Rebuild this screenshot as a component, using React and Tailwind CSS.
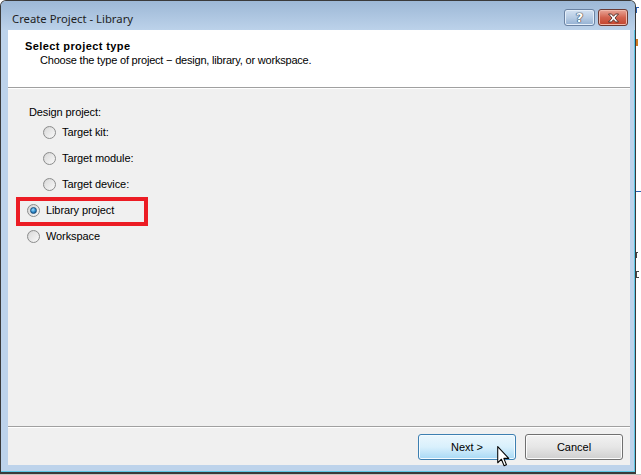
import React from "react";

function Radio({ checked }) {
  return (
    <span className="flex h-[13px] w-[13px] shrink-0 items-center justify-center rounded-full border border-[#8b8c8c] bg-gradient-to-br from-[#d2d2d2] to-[#fafafa]">
      {checked ? (
        <span className="h-[7px] w-[7px] rounded-full border border-[#1b4f7d] bg-[radial-gradient(circle_at_40%_35%,#9fe0ff,#2a86c8_55%,#0d3f6e)]" />
      ) : (
        <span className="h-[9px] w-[9px] rounded-full bg-gradient-to-br from-[#dcdcdc] to-[#f6f6f6]" />
      )}
    </span>
  );
}

function Option({ label, checked }) {
  return (
    <div className="flex items-center gap-[6px]">
      <Radio checked={checked} />
      <span className="tracking-[-0.1px]">{label}</span>
    </div>
  );
}

function DialogButton({ children, primary }) {
  const tone = primary
    ? "border-[#3c7fb1] bg-gradient-to-b from-[#eaf6fd] via-[#d9f0fc] to-[#a7d9f5] shadow-[inset_0_0_0_1px_#f4fbff]"
    : "border-[#707070] bg-gradient-to-b from-[#f2f2f2] via-[#e6e6e6] to-[#cfcfcf] shadow-[inset_0_0_0_1px_#fcfcfc]";
  return (
    <button
      type="button"
      className={`flex h-[26px] w-[98px] items-center justify-center rounded-[3px] border text-[11px] text-black ${tone}`}
    >
      {children}
    </button>
  );
}

export default function App() {
  return (
    <div
      className="flex h-[475px] w-[641px] flex-col overflow-hidden bg-white text-[11px] text-black"
      style={{ fontFamily: '"Liberation Sans", Arial, sans-serif' }}
    >
      <div className="flex">
        {/* window */}
        <div className="flex h-[474px] w-[636px] flex-col rounded-t-[6px] border border-b-2 border-[#3a3a3a] bg-[#bdd3eb] shadow-[inset_-1px_-1px_0_#5cc6e4]">
          {/* title bar */}
          <div className="flex h-[29px] rounded-t-[5px] bg-gradient-to-b from-[#9db8d6] to-[#bcd2ea] pl-[11px] pr-[7px]">
            <span className="pt-[10px] text-[11.3px] leading-[16px] text-[#1e1e1e] [font-family:'Noto_Sans',sans-serif]">
              Create Project - Library
            </span>
            <div className="ml-auto mt-[8px] flex gap-[3px] self-start">
              <div className="flex h-[17px] w-[31px] items-center justify-center rounded-[3px] border border-[#6a82a2] bg-gradient-to-b from-[#d4e2f2] via-[#b7cce4] to-[#93b0d2] shadow-[inset_0_0_0_1px_#e4eef9]">
                <span className="text-[13px] font-bold leading-none text-white [text-shadow:0_0_1px_#2b3a4d,0_0_1px_#2b3a4d,0_0_1px_#2b3a4d] [font-family:'DejaVu_Sans',sans-serif]">
                  ?
                </span>
              </div>
              <div className="flex h-[17px] w-[30px] items-center justify-center rounded-[3px] border border-[#6b3a33] bg-gradient-to-b from-[#e8a597] via-[#d2634f] to-[#c2432c] shadow-[inset_0_0_0_1px_#f0b8aa]">
                <svg width="13" height="10" viewBox="0 0 13 10">
                  <path
                    d="M1.5 1 L4.5 1 L6.5 3.3 L8.5 1 L11.5 1 L8 5 L11.5 9 L8.5 9 L6.5 6.7 L4.5 9 L1.5 9 L5 5 Z"
                    fill="#ffffff"
                    stroke="#4a2a26"
                    strokeWidth="0.9"
                    strokeLinejoin="round"
                  />
                </svg>
              </div>
            </div>
          </div>

          {/* client area */}
          <div className="ml-[7px] flex h-[435px] w-[622px] flex-col bg-[#f0f0f0]">
            <div className="h-[58px] border-b border-[#a0a0a0] bg-white pl-[17px] pt-[10px]">
              <div className="text-[11px] font-bold leading-[13px] tracking-[0.4px]">Select project type</div>
              <div className="mt-[1px] pl-[15px] leading-[13px] tracking-[-0.2px]">
                Choose the type of project − design, library, or workspace.
              </div>
            </div>
            <div className="h-px bg-white" />

            <div className="flex h-[337px] flex-col pt-[16px]">
              <div className="flex h-[14px] items-center pl-[21px] tracking-[-0.1px]">Design project:</div>
              <div className="flex flex-col pl-[35px]">
                <div className="flex h-[26px] items-center">
                  <Option label="Target kit:" />
                </div>
                <div className="flex h-[26px] items-center">
                  <Option label="Target module:" />
                </div>
                <div className="flex h-[26px] items-center">
                  <Option label="Target device:" />
                </div>
              </div>
              <div className="ml-[8px] flex h-[29px] w-[132px] items-center border-4 border-[#ec1c24] pb-[2px] pl-[7px]">
                <Option label="Library project" checked />
              </div>
              <div className="ml-[19px] flex h-[20px] items-center">
                <Option label="Workspace" />
              </div>
            </div>

            <div className="h-px bg-[#a0a0a0]" />
            <div className="h-px bg-white" />
            <div className="flex h-[37px] justify-end gap-[9px] pr-[7px] pt-[6px]">
              <DialogButton primary>Next &gt;</DialogButton>
              <DialogButton>Cancel</DialogButton>
            </div>
          </div>
        </div>

        {/* another window behind, peeking out on the right */}
        <div className="flex w-[5px] flex-col">
          <span className="mt-[7px] h-[6px] w-[3px] border-l border-t border-[#2a5fb0]" />
          <span className="mt-[26px] h-[7px] w-[2px] bg-[#d07a20]" />
          <span className="mt-[145px] h-px w-[5px] bg-[#2a5fb0]" />
          <span className="mt-[60px] h-[6px] w-[2px] border-l border-t border-[#444]" />
          <span className="mt-[13px] h-[7px] w-[3px] border-l border-t border-b border-[#444]" />
        </div>
      </div>
      <div className="h-px bg-[#c6c6c0]" />

      {/* mouse pointer over the Next button */}
      <svg
        className="pointer-events-none absolute left-[497px] top-[446px]"
        width="13"
        height="21"
        viewBox="0 0 12 20"
      >
        <path
          d="M0.5 0.5 L0.5 16 L4 12.6 L6.6 18.8 L8.8 17.9 L6.3 11.8 L11 11.8 Z"
          fill="#ffffff"
          stroke="#000000"
          strokeWidth="1"
          strokeLinejoin="round"
        />
      </svg>
    </div>
  );
}
